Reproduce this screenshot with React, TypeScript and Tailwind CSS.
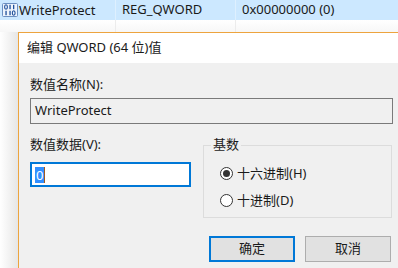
import React from "react";

const font = { fontFamily: '"Noto Sans", "Noto Sans CJK SC", sans-serif' };

function RegIcon() {
  return (
    <svg width="16" height="14" viewBox="0 0 16 14">
      <rect x="0.5" y="0.5" width="15" height="13" rx="1" fill="#eef4fc" stroke="#6c8fc0" />
      <ellipse cx="4" cy="4" rx="1.4" ry="2.2" fill="none" stroke="#1f4f9a" strokeWidth="1.1" />
      <rect x="7.4" y="1.8" width="1.3" height="4.4" fill="#1f4f9a" />
      <rect x="11" y="1.8" width="1.3" height="4.4" fill="#1f4f9a" />
      <rect x="3.4" y="7.8" width="1.3" height="4.4" fill="#1f4f9a" />
      <rect x="7.4" y="7.8" width="1.3" height="4.4" fill="#1f4f9a" />
      <ellipse cx="11.7" cy="10" rx="1.4" ry="2.2" fill="none" stroke="#1f4f9a" strokeWidth="1.1" />
    </svg>
  );
}

export default function App() {
  return (
    <div className="w-[398px] h-[268px] overflow-hidden bg-white text-[13px] text-[#1a1a1a]" style={font}>
      {/* registry list row */}
      <div className="h-[20px] bg-[#cce8ff] flex">
        <div className="w-[116px] shrink-0 flex items-center border-r border-[#def0ff] pl-[2px] gap-[1px]">
          <RegIcon />
          <span className="leading-[20px]">WriteProtect</span>
        </div>
        <div className="w-[120px] shrink-0 flex items-center border-r border-[#def0ff] pl-[6px]">REG_QWORD</div>
        <div className="flex-1 flex items-center pl-[6px]">0x00000000 (0)</div>
      </div>
      <div className="h-[12px] flex bg-gradient-to-b from-white to-[#f7f7f7]">
        <div className="w-[116px] shrink-0 border-r border-[#ececec]"></div>
        <div className="w-[120px] shrink-0 border-r border-[#ececec]"></div>
        <div className="flex-1"></div>
      </div>

      {/* dialog */}
      <div className="flex">
        <div className="w-[18px] shrink-0 bg-gradient-to-r from-white to-[#e6e6e6]"></div>
        <div className="w-[400px] shrink-0 border-l border-t border-[#eda43e]">
          <div className="h-[30px] bg-white flex items-center pl-[8px]">
            <span className="text-[13px]">编辑 QWORD (64 位)值</span>
            <svg width="12" height="12" viewBox="0 0 12 12" className="ml-[236px]">
              <path d="M1 1 L11 11 M11 1 L1 11" stroke="#111" strokeWidth="1" fill="none" />
            </svg>
          </div>
          <div className="bg-[#f0f0f0] h-[300px] pl-[11px] flex flex-col">
            <div className="mt-[13px] leading-[17px]">数值名称(N):</div>
            <div className="mt-[5px] w-[363px] h-[26px] border border-[#7a7a7a] bg-[#f0f0f0] flex items-center pl-[4px]">
              WriteProtect
            </div>
            <div className="mt-[12px] flex gap-[12px] items-start">
              <div className="w-[161px] shrink-0 flex flex-col">
                <div className="leading-[17px]">数值数据(V):</div>
                <div className="mt-[9px] h-[25px] border-2 border-[#0078d7] bg-white flex items-center pl-[3px]">
                  <span className="bg-[#3390ff] text-white leading-[16px] px-[1px]">0</span>
                  <span className="w-[1px] h-[16px] bg-[#a05a20]"></span>
                </div>
              </div>
              <div className="mt-[9px] w-[189px] shrink-0 h-[73px] border border-[#dcdcdc] relative flex flex-col pl-[16px]">
                <span className="absolute -top-[10px] left-[7px] px-[2px] bg-[#f0f0f0] leading-[17px]">基数</span>
                <div className="mt-[20px] flex items-center gap-[4px] h-[14px]">
                  <span className="w-[13px] h-[13px] rounded-full border border-[#333] bg-white flex items-center justify-center">
                    <span className="w-[7px] h-[7px] rounded-full bg-[#333]"></span>
                  </span>
                  <span className="leading-[14px]">十六进制(H)</span>
                </div>
                <div className="mt-[13px] flex items-center gap-[4px] h-[14px]">
                  <span className="w-[13px] h-[13px] rounded-full border border-[#333] bg-white"></span>
                  <span className="leading-[14px]">十进制(D)</span>
                </div>
              </div>
            </div>
            <div className="mt-[18px] flex gap-[10px] pl-[179px]">
              <div className="w-[86px] h-[26px] bg-[#e1e1e1] border-2 border-[#0078d7] flex items-center justify-center">确定</div>
              <div className="w-[86px] h-[26px] bg-[#e1e1e1] border border-[#adadad] flex items-center justify-center">取消</div>
            </div>
          </div>
        </div>
      </div>
    </div>
  );
}
